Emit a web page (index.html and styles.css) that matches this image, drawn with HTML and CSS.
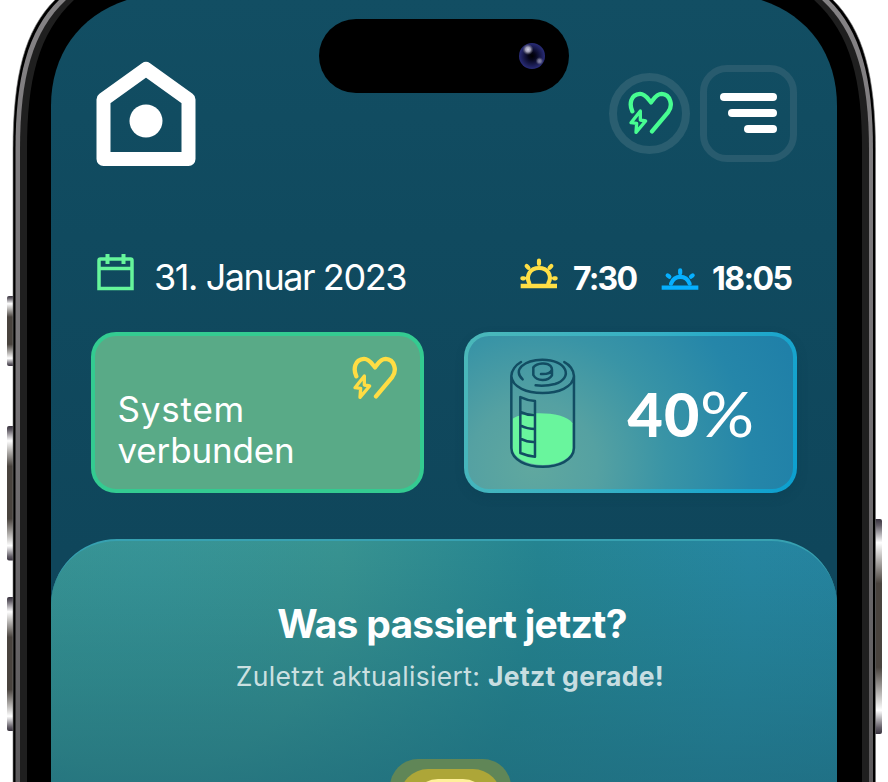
FILE: index.html
```
<!DOCTYPE html>
<html lang="de">
<head>
<meta charset="utf-8">
<title>Energie</title>
<link rel="stylesheet" href="styles.css">
</head>
<body>
<svg class="device" viewBox="0 0 888 782" aria-hidden="true">
  <defs>
    <linearGradient id="metal" x1="0" y1="0" x2="0" y2="1">
      <stop offset="0" stop-color="#38323e"/><stop offset=".03" stop-color="#625d66"/><stop offset=".11" stop-color="#fff"/><stop offset=".3" stop-color="#49433e"/><stop offset=".69" stop-color="#49433e"/><stop offset=".89" stop-color="#fff"/><stop offset=".97" stop-color="#625d66"/><stop offset="1" stop-color="#38323e"/>
    </linearGradient>
    <linearGradient id="screen" x1="0" y1="0" x2="0" y2="1">
      <stop offset="0" stop-color="#124e63"/><stop offset=".3" stop-color="#104a5f"/><stop offset=".7" stop-color="#0f465b"/>
    </linearGradient>
    <linearGradient id="rim" x1="0" y1="0" x2="0" y2="1">
      <stop offset="0" stop-color="#858385"/><stop offset=".5" stop-color="#757275"/><stop offset="1" stop-color="#5b595b"/>
    </linearGradient>
    <radialGradient id="lens"><stop offset="0" stop-color="#000"/><stop offset=".28" stop-color="#05051a"/><stop offset="1" stop-color="#292c78"/></radialGradient>
    <radialGradient id="glint"><stop offset="0" stop-color="#d6d4e6"/><stop offset=".45" stop-color="#b9b7cc" stop-opacity=".85"/><stop offset="1" stop-color="#777" stop-opacity="0"/></radialGradient>
  </defs>
  <g fill="url(#metal)">
    <rect x="7" y="296" width="10" height="70" rx="2"/>
    <rect x="7" y="426" width="10" height="134.500" rx="2"/>
    <rect x="7" y="597" width="10" height="134" rx="2"/>
    <rect x="872" y="519" width="10" height="215" rx="2"/>
  </g>
  <path fill="#000" stroke="#777" stroke-width=".6" d="M13 790V150C13 75 25 29 56-1H832C863 29 875.500 75 875.500 150V790Z"/>
  <path fill="url(#rim)" d="M15.500 790V150C15.500 76 28 30 60-1H828C860 30 873 76 873 150V790Z"/>
  <path fill="#1f1f1f" d="M20 790V150C20 76 33 30 67-1H821C855 30 869 76 869 150V790Z"/>
  <path fill="#000" d="M27 790V150C27 80 38 33 75-1H813C851 33 862 80 862 150V790Z"/>
  <path fill="url(#screen)" d="M51 790V106C51 54 80 14 130-1H758C808 14 837 54 837 106V790Z"/>
  <rect x="319" y="19" width="250" height="74" rx="37"/>
  <circle cx="532" cy="56" r="13" fill="url(#lens)"/>
  <circle cx="528" cy="49.500" r="5.500" fill="url(#glint)"/>
  <circle cx="539.500" cy="61" r="4" fill="url(#glint)" opacity=".6"/>
</svg>

<main class="app">
  <header class="topbar">
    <svg class="logo" viewBox="0 0 100 106"><path d="M7.500 38.500L50 8L92.500 38.500V98H7.500Z" fill="none" stroke="#fff" stroke-width="14" stroke-linejoin="round"/><circle cx="50" cy="60" r="16.500" fill="#fff"/></svg>
    <div class="actions">
      <div class="status">
        <svg class="heart" viewBox="815 108 138 132"><path class="curve" d="M828 169C819 150 821 118 851 116.500C867 116 874 131 884 142C893 131 900 116.500 916 116.500C943 118 951 152 935 172L887 229"/><path class="bolt" d="M852 168L824 203L841 205L839 232L868 198L852 195Z"/></svg>
      </div>
      <div class="menu"><span></span><span></span><span></span></div>
    </div>
  </header>

  <section class="daybar">
    <svg class="calendar" viewBox="0 0 37 38"><path d="M2 7.500Q2 6 3.500 6H33.500Q35 6 35 7.500V35.500H2ZM2 15.500H35" fill="none" stroke="#66f59b" stroke-width="3.500"/><path d="M10.500 1V11M26.500 1V11" stroke="#66f59b" stroke-width="4"/></svg>
    <span class="date">31. Januar 2023</span>
    <svg class="sunrise" viewBox="60 52 114 96"><path d="M62 136H171" stroke-width="14"/><path stroke-linecap="round" d="M88 128C76 103 92 82 117 82S158 103 145 128M117 60V70M80 76L85 81M154 76L149 81M67 113H72M162 113H167" stroke-width="12.500"/></svg>
    <span class="time rise">7:30</span>
    <svg class="sunset" viewBox="482 84 114 68"><path d="M484 143H594" stroke-width="13"/><path stroke-linecap="round" d="M512 131C523 104 557 104 568 131M539.500 91V100M502 106L507 110M577 106L572 110" stroke-width="12.500"/></svg>
    <span class="time set">18:05</span>
  </section>

  <section class="cards">
    <article class="card connected">
      <svg class="heart" viewBox="815 108 138 132"><path class="curve" d="M828 169C819 150 821 118 851 116.500C867 116 874 131 884 142C893 131 900 116.500 916 116.500C943 118 951 152 935 172L887 229"/><path class="bolt" d="M852 168L824 203L841 205L839 232L868 198L852 195Z"/></svg>
      <p><span class="wide">System</span><br><span>verbunden</span></p>
    </article>
    <article class="card charge">
      <svg class="battery" viewBox="178 110 202 336">
        <path fill="#69f59d" d="M189 295C220 273 343 270 369 309V390C350 450 210 448 189 390Z"/>
        <g fill="none" stroke="#124d63" stroke-width="7.500" stroke-linecap="round" stroke-linejoin="round">
          <path d="M214 125C198 134 185 151 185 167V383C187 458 371 458 373 383V167C373 150 359 132 344 125M185 167C190 235 368 235 373 167"/>
          <path d="M219 177C188 149 223 119 278 118C352 118 373 172 316 191Q289 198 258 195"/>
          <path d="M303 137C292 125 263 127 251 141V164C262 184 295 184 307 165V148C303 158 290 162 274 161M303 137Q307 141 307 148"/>
          <path d="M212 230Q233 240 256 242V409Q233 407 212 398ZM212 275Q233 285 256 284M212 315Q233 326 256 326M212 355Q233 366 256 365"/>
        </g>
      </svg>
      <div class="percent"><strong>40</strong><span>%</span></div>
    </article>
  </section>

  <section class="panel">
    <h1>Was passiert jetzt?</h1>
    <p class="updated"><span>Zuletzt aktualisiert:</span> <strong>Jetzt gerade!</strong></p>
    <div class="source"><div class="source-ring"><div class="source-core"></div></div></div>
  </section>
</main>
</body>
</html>
```
FILE: styles.css
```
* { box-sizing: border-box; }
body { margin: 0; width: 888px; height: 782px; overflow: hidden; background: #fff; color: #fff; font-family: Inter, "Liberation Sans", sans-serif; }
svg { display: block; flex: none; }
.device { position: absolute; left: 0; top: 0; width: 888px; height: 782px; }
.app { position: relative; width: 786px; height: 782px; margin-left: 51px; display: flex; flex-direction: column; overflow: hidden; }

.topbar { flex: none; height: 230px; padding: 61px 40px 0 45px; display: flex; justify-content: space-between; align-items: flex-start; }
.logo { width: 100px; height: 106px; }
.actions { display: flex; align-items: center; gap: 10px; margin-top: 4.400px; }
.status { width: 81px; height: 81px; border: 8px solid #2a5e70; border-radius: 50%; padding: 10px 0 0 10.500px; }
.heart { width: 46px; height: 44px; fill: none; stroke: #47fd91; stroke-linecap: round; stroke-linejoin: round; }
.curve { stroke-width: 13; }
.bolt { stroke-width: 10; }
.menu { width: 97px; height: 97px; border: 7px solid #285b6e; border-radius: 27px; padding: 21px 13px 0 0; display: flex; flex-direction: column; align-items: flex-end; gap: 8px; }
.menu span { height: 8px; border-radius: 4px; background: #fff; width: 57px; }
.menu span:nth-child(2) { width: 49px; }
.menu span:nth-child(3) { width: 33px; }

.daybar { flex: none; height: 102px; padding: 22.500px 0 0 46px; display: flex; align-items: flex-start; white-space: nowrap; }
.calendar { width: 37px; height: 38px; }
.date { flex: none; width: 386px; padding-left: 20px; margin-top: 2.500px; font-size: 36px; line-height: 44px; letter-spacing: -1.430px; }
.sunrise { width: 38px; height: 32px; margin-top: 5px; fill: none; stroke: #ffdf45; }
.sunset { width: 38px; height: 22.700px; margin-top: 15.500px; fill: none; stroke: #06b0ff; }
.time { flex: none; font-size: 32px; line-height: 44px; font-weight: 700; margin-top: 4.500px; }
.rise { width: 103px; padding-left: 15px; letter-spacing: -1.800px; }
.set { padding-left: 13px; letter-spacing: -1.600px; }

.cards { flex: none; display: flex; gap: 40px; padding-left: 40px; height: 207px; }
.card { width: 333px; height: 161px; border-radius: 25px; }
.connected { border: 4px solid #34cb91; background: #59aa87; padding: 20px 22.500px 0; }
.connected .heart { margin-left: auto; stroke: #ffdd43; }
.connected p { margin: -11px 0 0; font-size: 35px; line-height: 41px; letter-spacing: -.150px; }
.connected .wide { letter-spacing: .8px; }
.charge { border: 4px solid transparent; background: radial-gradient(circle at 20% 85%, #60a89f 0, #55a1a2 22%, #3994a6 46%, #2586a9 75%, #1f7fa8 100%) padding-box, linear-gradient(110deg, #4bb8b9, #36b0c5 50%, #0b9fd0) border-box; display: flex; box-shadow: 1px 4px 10px #0b3c5050; }
.battery { width: 67.300px; height: 112px; margin: 20.500px 0 0 41.300px; }
.percent { display: flex; align-items: baseline; margin: 37px 0 0 51px; font-family: Lato, sans-serif; font-size: 61px; line-height: 80px; }
.percent strong { font-weight: 900; letter-spacing: 1px; }
.percent span { font-size: 62px; transform: scaleX(1.09); transform-origin: left; }

.panel { flex: 1; border-top: 2px solid #37a1b1; border-radius: 66px 66px 0 0; background: linear-gradient(to bottom, #1c687400 0, #1c687455 38%, #1c6273cc 100%), radial-gradient(circle at 12% 10%, #379497 0, #389391 26%, #258491 52%, #2686a1 80%, #2583a0 100%); text-align: center; display: flex; flex-direction: column; align-items: center; }
h1 { margin: 60px 0 0 16px; font-size: 39px; line-height: 46px; font-weight: 750; white-space: nowrap; letter-spacing: -.750px; }
.updated { margin: 11px 0 0 12px; font-size: 26.500px; line-height: 36px; color: #ffffffc4; white-space: nowrap; letter-spacing: .320px; }
.source { flex: none; width: 121px; height: 121px; margin: 65px 0 0 13px; border-radius: 28px; background: #608657; padding-top: 10px; }
.source-ring { width: 101px; height: 101px; margin: auto; border-radius: 28px; background: #ada638; padding-top: 10px; }
.source-core { width: 75px; height: 81px; margin: auto; border-radius: 25px; border: 3px solid #fff099; background: #ffdd40; }
```
